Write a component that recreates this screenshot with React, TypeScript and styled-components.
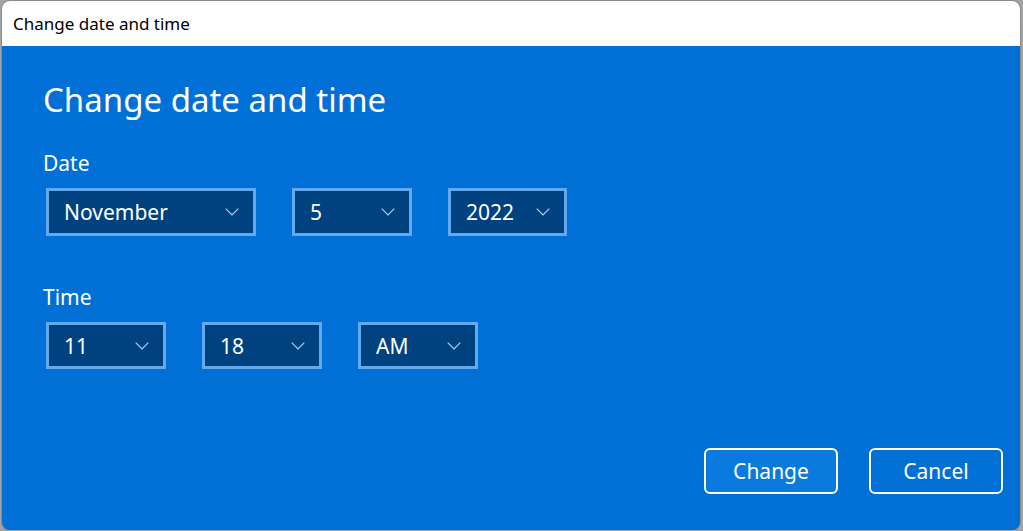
import React from "react";
import styled, { createGlobalStyle } from "styled-components";

const Global = createGlobalStyle`
  html, body { margin: 0; padding: 0; background: #a3a3a3; }
  body { font-family: "Noto Sans", "Open Sans", sans-serif; overflow: hidden; }
  * { box-sizing: border-box; }
`;

const Window = styled.div`
  margin: 1px 3px 0 2px;
  height: 529px;
  border-radius: 8px;
  overflow: hidden;
  display: flex;
  flex-direction: column;
  background: #0070d6;
  box-shadow: 0 0 0 1px #8c8c8c;
`;

const TitleBar = styled.div`
  height: 45px;
  flex: none;
  background: #ffffff;
  display: flex;
  align-items: center;
  padding-left: 11px;
  font-size: 17px;
  color: #000;
`;

const Content = styled.div`
  flex: 1;
  display: flex;
  flex-direction: column;
  padding: 34px 17px 36px 41px;
  color: #fff;
`;

const Heading = styled.h1`
  margin: 0;
  font-weight: 400;
  font-size: 33px;
  line-height: 40px;
  height: 40px;
`;

const Label = styled.div<{ $top: number }>`
  margin-top: ${(p) => p.$top}px;
  font-size: 21px;
  line-height: 24px;
  height: 24px;
`;

const Row = styled.div<{ $top: number }>`
  margin-top: ${(p) => p.$top}px;
  display: flex;
  gap: 36px;
  padding-left: 3px;
`;

const Select = styled.div<{ $w: number; $h: number }>`
  width: ${(p) => p.$w}px;
  height: ${(p) => p.$h}px;
  border: 3px solid #63a9ef;
  background: #00427f;
  display: flex;
  align-items: center;
  justify-content: space-between;
  padding: 0 14px 0 15px;
  font-size: 21px;
  color: #fff;
`;

const Chevron = styled.svg`
  width: 14px;
  height: 8px;
  flex: none;
`;

const Buttons = styled.div`
  margin-top: auto;
  display: flex;
  justify-content: flex-end;
  gap: 31px;
`;

const Button = styled.button<{ $primary?: boolean }>`
  width: 134px;
  height: 46px;
  border: 2.5px solid #ffffff;
  border-radius: 6px;
  background: ${(p) => (p.$primary ? "#0a7adf" : "#0070d6")};
  color: #fff;
  font-family: inherit;
  font-size: 21px;
  padding: 0;
  cursor: pointer;
`;

const Down = () => (
  <Chevron viewBox="0 0 14 8">
    <path d="M0.7 0.7 L7 7 L13.3 0.7" fill="none" stroke="#a9d1f6" strokeWidth="1.2" />
  </Chevron>
);

const Drop = ({ v, w, h }: { v: string; w: number; h: number }) => (
  <Select $w={w} $h={h}>
    <span>{v}</span>
    <Down />
  </Select>
);

export default function App() {
  return (
    <>
      <Global />
      <Window>
        <TitleBar>Change date and time</TitleBar>
        <Content>
          <Heading>Change date and time</Heading>
          <Label $top={31}>Date</Label>
          <Row $top={13}>
            <Drop v="November" w={210} h={48} />
            <Drop v="5" w={120} h={48} />
            <Drop v="2022" w={119} h={48} />
          </Row>
          <Label $top={49}>Time</Label>
          <Row $top={13}>
            <Drop v="11" w={120} h={47} />
            <Drop v="18" w={120} h={47} />
            <Drop v="AM" w={120} h={47} />
          </Row>
          <Buttons>
            <Button $primary>Change</Button>
            <Button>Cancel</Button>
          </Buttons>
        </Content>
      </Window>
    </>
  );
}
